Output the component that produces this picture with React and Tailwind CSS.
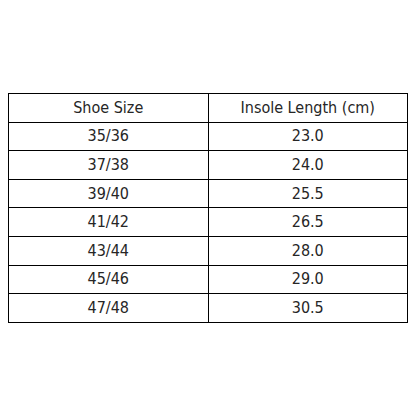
const rows = [
  ['35/36', '23.0'],
  ['37/38', '24.0'],
  ['39/40', '25.5'],
  ['41/42', '26.5'],
  ['43/44', '28.0'],
  ['45/46', '29.0'],
  ['47/48', '30.5'],
];

export default function App() {
  return (
    <div className="w-[416px] h-[416px] bg-white px-2 pt-[93px]" style={{ fontFamily: '"DejaVu Sans Condensed", "DejaVu Sans", sans-serif' }}>
      <table className="w-full border-collapse text-[16px] text-[#262626]">
        <thead>
          <tr>
            <th className="w-1/2 h-[28.6px] border border-black font-normal p-0">Shoe Size</th>
            <th className="w-1/2 h-[28.6px] border border-black font-normal p-0">Insole Length (cm)</th>
          </tr>
        </thead>
        <tbody>
          {rows.map((r) => (
            <tr key={r[0]}>
              <td className="h-[28.6px] border border-black text-center p-0">{r[0]}</td>
              <td className="h-[28.6px] border border-black text-center p-0">{r[1]}</td>
            </tr>
          ))}
        </tbody>
      </table>
    </div>
  );
}
